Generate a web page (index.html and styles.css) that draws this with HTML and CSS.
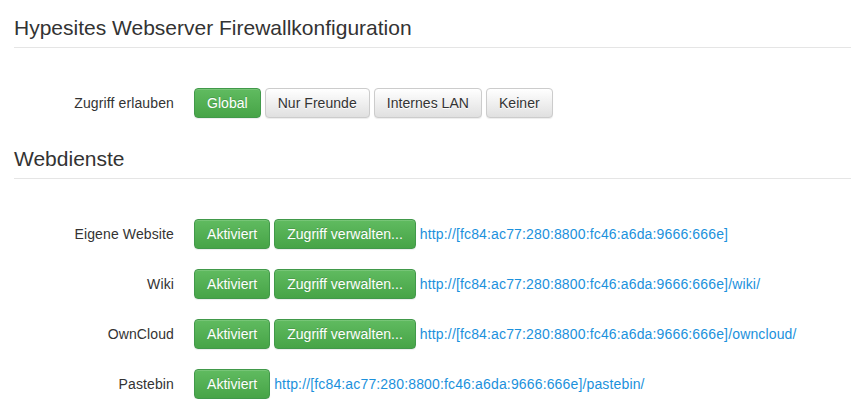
FILE: index.html
```html
<!DOCTYPE html>
<html lang="de">
<head>
<meta charset="utf-8">
<title>Hypesites Webserver Firewallkonfiguration</title>
<link rel="stylesheet" href="styles.css">
</head>
<body>
<div class="page">
  <h3 class="section-title">Hypesites Webserver Firewallkonfiguration</h3>
  <div class="form-row first">
    <span class="row-label">Zugriff erlauben</span>
    <div class="controls">
      <button class="btn btn-success">Global</button>
      <button class="btn btn-default">Nur Freunde</button>
      <button class="btn btn-default">Internes LAN</button>
      <button class="btn btn-default">Keiner</button>
    </div>
  </div>

  <h3 class="section-title second">Webdienste</h3>
  <div class="form-row first">
    <span class="row-label">Eigene Website</span>
    <div class="controls">
      <button class="btn btn-success">Aktiviert</button>
      <button class="btn btn-success">Zugriff verwalten...</button>
      <a class="link" href="#">http://[fc84:ac77:280:8800:fc46:a6da:9666:666e]</a>
    </div>
  </div>
  <div class="form-row">
    <span class="row-label">Wiki</span>
    <div class="controls">
      <button class="btn btn-success">Aktiviert</button>
      <button class="btn btn-success">Zugriff verwalten...</button>
      <a class="link" href="#">http://[fc84:ac77:280:8800:fc46:a6da:9666:666e]/wiki/</a>
    </div>
  </div>
  <div class="form-row">
    <span class="row-label">OwnCloud</span>
    <div class="controls">
      <button class="btn btn-success">Aktiviert</button>
      <button class="btn btn-success">Zugriff verwalten...</button>
      <a class="link" href="#">http://[fc84:ac77:280:8800:fc46:a6da:9666:666e]/owncloud/</a>
    </div>
  </div>
  <div class="form-row">
    <span class="row-label">Pastebin</span>
    <div class="controls">
      <button class="btn btn-success">Aktiviert</button>
      <a class="link" href="#">http://[fc84:ac77:280:8800:fc46:a6da:9666:666e]/pastebin/</a>
    </div>
  </div>
</div>
</body>
</html>
```
FILE: styles.css
```css
html, body {
  margin: 0;
  padding: 0;
  background: #fff;
}
body {
  font-family: "Liberation Sans", Arial, sans-serif;
  font-size: 14px;
  color: #333;
}
.page {
  padding: 13px 0 0 14px;
}
.section-title {
  margin: 0;
  font-size: 21px;
  font-weight: normal;
  line-height: 30px;
  padding-bottom: 4px;
  border-bottom: 1px solid #e5e5e5;
  color: #333;
}
.section-title.second {
  margin-top: 26px;
}
.form-row {
  display: grid;
  grid-template-columns: 160px 1fr;
  column-gap: 20px;
  align-items: center;
  margin-top: 20px;
}
.form-row.first {
  margin-top: 40px;
}
.row-label {
  text-align: right;
  line-height: 30px;
  letter-spacing: 0.12px;
}
.controls {
  display: flex;
  align-items: center;
  gap: 4px;
}
.btn {
  font-family: inherit;
  font-size: 14px;
  line-height: 20px;
  height: 30px;
  padding: 4px 12px;
  border: 1px solid transparent;
  border-radius: 4px;
  cursor: pointer;
  margin: 0;
  letter-spacing: 0.04px;
}
.btn-success {
  color: #fff;
  background-image: linear-gradient(to bottom, #60bb60 0, #47a447 100%);
  border-color: #41994a;
  text-shadow: 0 -1px 0 rgba(0,0,0,.15);
  box-shadow: inset 0 1px 0 rgba(255,255,255,.15), 0 1px 1px rgba(0,0,0,.075);
}
.btn-default {
  color: #333;
  background-image: linear-gradient(to bottom, #fff 0, #e0e0e0 100%);
  border-color: #ccc;
  text-shadow: 0 1px 0 #fff;
  box-shadow: inset 0 1px 0 rgba(255,255,255,.15), 0 1px 1px rgba(0,0,0,.075);
}
.link {
  color: #1b91dc;
  text-decoration: none;
  line-height: 20px;
  letter-spacing: 0.15px;
}
```
